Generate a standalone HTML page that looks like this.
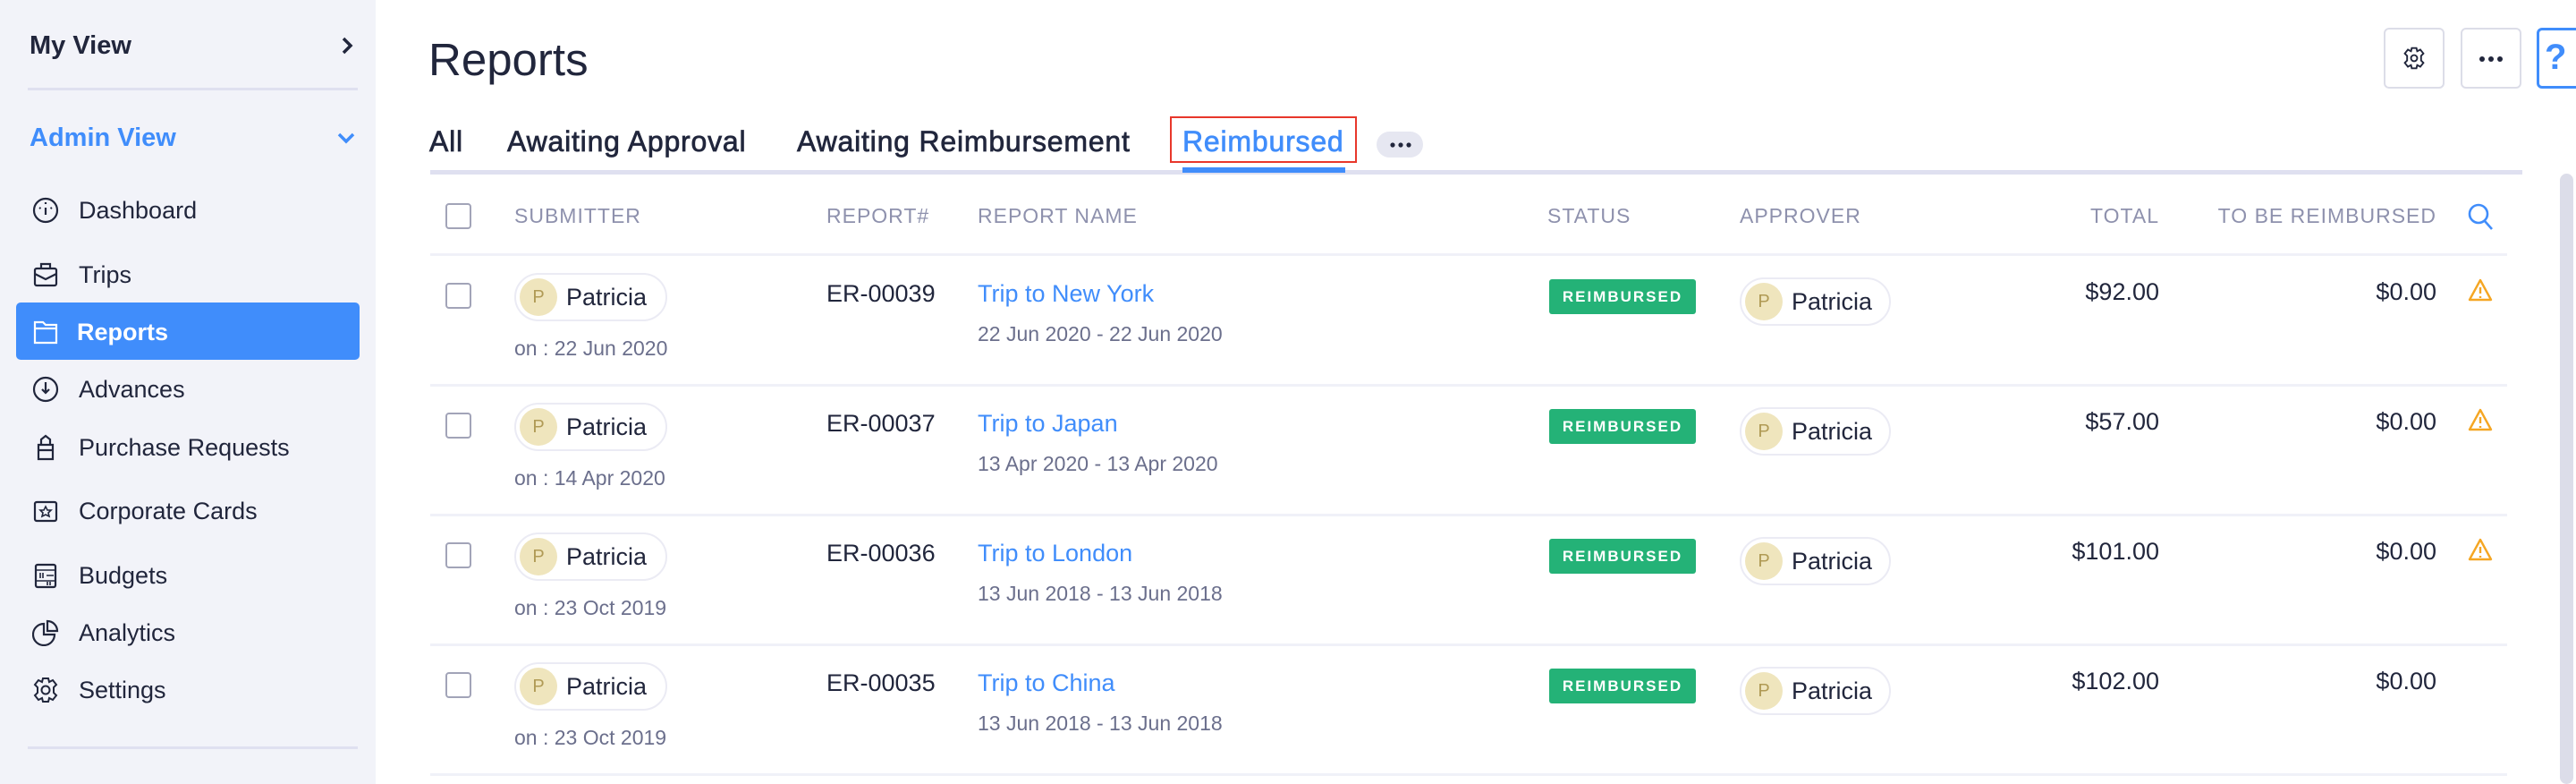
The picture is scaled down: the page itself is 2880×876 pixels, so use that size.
<!DOCTYPE html>
<html><head><meta charset="utf-8"><style>
*{margin:0;padding:0;box-sizing:border-box}
body{width:2880px;height:876px;overflow:hidden;background:#fff;font-family:"Liberation Sans",sans-serif;color:#21263c;position:relative}
.a{position:absolute;white-space:nowrap}
.side{position:absolute;left:0;top:0;width:420px;height:876px;background:#f2f3f9}
.mi{position:absolute;left:88px;font-size:27px;line-height:34px;color:#21263c}
.ic{position:absolute;left:36px;width:30px;height:30px}
.hd{position:absolute;top:227px;font-size:23px;letter-spacing:1px;color:#8e91ad;line-height:28px}
.cb{position:absolute;left:498px;width:29px;height:29px;border:2.5px solid #a2a4b8;border-radius:4px;background:#fff}
.pill{position:absolute;height:54px;border:2px solid #ebebf4;border-radius:27px;background:#fff;padding-left:56px;font-size:27px;line-height:50px;color:#21263c}
.pill i{position:absolute;left:4px;top:4px;width:42px;height:42px;border-radius:50%;background:#efe5bd;color:#b09a55;font-style:normal;font-size:20px;line-height:42px;text-align:center;box-shadow:0 0 0 3px #fff}
.dt{font-size:23px;color:#6b6f8c}
.badge{position:absolute;left:1732px;width:164px;height:39px;background:#24b277;border-radius:3px;color:#fff;font-size:17px;font-weight:bold;letter-spacing:2px;text-align:center;line-height:39px}
.num{font-size:27px;text-align:right}
.ln{position:absolute;left:481px;width:2322px;height:3px;background:#f0f1f8}
.tab{position:absolute;top:139px;font-size:32px;line-height:38px;color:#21263c;-webkit-text-stroke:0.7px currentColor;letter-spacing:0.8px;white-space:nowrap}
</style></head><body>
<div class="side">
 <div class="a" style="left:33px;top:33px;font-size:29px;font-weight:bold;line-height:36px">My View</div>
 <svg class="a" style="left:380px;top:40px" width="16" height="22" viewBox="0 0 16 22"><path d="M4 3l8 8-8 8" fill="none" stroke="#21263c" stroke-width="3.5"/></svg>
 <div class="a" style="left:31px;top:98px;width:369px;height:3px;background:#dfe0f0"></div>
 <div class="a" style="left:33px;top:136px;font-size:29px;font-weight:bold;color:#408dfb;line-height:36px">Admin View</div>
 <svg class="a" style="left:376px;top:146px" width="22" height="16" viewBox="0 0 22 16"><path d="M3 4l8 8 8-8" fill="none" stroke="#408dfb" stroke-width="3.5"/></svg>
 <svg class="ic" style="top:220px" viewBox="0 0 30 30"><circle cx="15" cy="15" r="13" fill="none" stroke="#21263c" stroke-width="2.2"/><path d="M15 6v2M8 12l1.5 1M22 12l-1.5 1M15 12v8" stroke="#21263c" stroke-width="2.2"/></svg>
 <div class="mi" style="top:218px">Dashboard</div>
 <svg class="ic" style="top:292px" viewBox="0 0 30 30"><rect x="3" y="8" width="24" height="19" rx="2" fill="none" stroke="#21263c" stroke-width="2.2"/><path d="M10 8V3h10v5M3 14l12 6 12-6" fill="none" stroke="#21263c" stroke-width="2.2"/></svg>
 <div class="mi" style="top:290px">Trips</div>
 <div class="a" style="left:18px;top:338px;width:384px;height:64px;background:#408dfb;border-radius:5px"></div>
 <svg class="ic" style="top:356px" viewBox="0 0 30 30"><path d="M3 4h9l3 3h12v20H3z M3 11h24" fill="none" stroke="#fff" stroke-width="2.2"/></svg>
 <div class="mi" style="top:354px;left:86px;color:#fff;font-weight:bold">Reports</div>
 <svg class="ic" style="top:420px" viewBox="0 0 30 30"><circle cx="15" cy="15" r="13" fill="none" stroke="#21263c" stroke-width="2.2"/><path d="M15 7v12M11 15l4 4 4-4" fill="none" stroke="#21263c" stroke-width="2.2"/></svg>
 <div class="mi" style="top:418px">Advances</div>
 <svg class="ic" style="top:485px" viewBox="0 0 30 30"><path d="M7 12h16v16H7zM10 12V6l5-4 5 4v6M7 18h16" fill="none" stroke="#21263c" stroke-width="2.2"/></svg>
 <div class="mi" style="top:483px">Purchase Requests</div>
 <svg class="ic" style="top:556px" viewBox="0 0 30 30"><rect x="3" y="5" width="24" height="21" rx="2" fill="none" stroke="#21263c" stroke-width="2.2"/><path d="M15 10l2 4h4l-3 3 1 4-4-2-4 2 1-4-3-3h4z" fill="none" stroke="#21263c" stroke-width="1.6"/></svg>
 <div class="mi" style="top:554px">Corporate Cards</div>
 <svg class="ic" style="top:628px" viewBox="0 0 30 30"><rect x="4" y="3" width="22" height="25" rx="2" fill="none" stroke="#21263c" stroke-width="2.2"/><path d="M4 9h22M4 21h22M9 12v6M12 12v6M16 15h8M17 22v4M20 22v4" stroke="#21263c" stroke-width="1.6"/></svg>
 <div class="mi" style="top:626px">Budgets</div>
 <svg class="ic" style="top:692px" viewBox="0 0 30 30"><path d="M13 5A12 12 0 1 0 25 17H13z M17 2v11h11A11 11 0 0 0 17 2z" fill="none" stroke="#21263c" stroke-width="2.2"/></svg>
 <div class="mi" style="top:690px">Analytics</div>
 <svg class="ic" style="top:756px" viewBox="0 0 30 30"><path d="M12 2h6l1 4 4-2 4 5-3 3 0 6 3 3-4 5-4-2-1 4h-6l-1-4-4 2-4-5 3-3v-6L3 9l4-5 4 2z" fill="none" stroke="#21263c" stroke-width="2"/><circle cx="15" cy="15" r="4.5" fill="none" stroke="#21263c" stroke-width="2"/></svg>
 <div class="mi" style="top:754px">Settings</div>
 <div class="a" style="left:31px;top:834px;width:369px;height:3px;background:#dfe0f0"></div>
</div>

<div class="a" style="left:479px;top:37px;font-size:51px;line-height:60px;color:#21263c">Reports</div>
<div class="a" style="left:2665px;top:31px;width:68px;height:68px;border:2px solid #dcdde8;border-radius:6px"></div>
<svg class="a" style="left:2686px;top:52px" width="26" height="26" viewBox="0 0 30 30"><path d="M12 2h6l1 4 4-2 4 5-3 3 0 6 3 3-4 5-4-2-1 4h-6l-1-4-4 2-4-5 3-3v-6L3 9l4-5 4 2z" fill="none" stroke="#21263c" stroke-width="2.2"/><circle cx="15" cy="15" r="4" fill="none" stroke="#21263c" stroke-width="2.2"/></svg>
<div class="a" style="left:2751px;top:31px;width:68px;height:68px;border:2px solid #dcdde8;border-radius:6px"></div>
<svg class="a" style="left:2771px;top:62px" width="28" height="8"><circle cx="4" cy="4" r="3" fill="#21263c"/><circle cx="14" cy="4" r="3" fill="#21263c"/><circle cx="24" cy="4" r="3" fill="#21263c"/></svg>
<div class="a" style="left:2836px;top:31px;width:68px;height:68px;border:3px solid #408dfb;border-radius:6px"></div>
<div class="a" style="left:2845px;top:42px;font-size:40px;font-weight:bold;color:#408dfb">?</div>

<div class="tab" style="left:480px">All</div>
<div class="tab" style="left:567px">Awaiting Approval</div>
<div class="tab" style="left:891px">Awaiting Reimbursement</div>
<div class="a" style="left:1308px;top:130px;width:209px;height:52px;border:2.5px solid #e8372b"></div>
<div class="tab" style="left:1322px;color:#408dfb">Reimbursed</div>
<div class="a" style="left:1539px;top:147px;width:52px;height:29px;border-radius:15px;background:#e6e7f1"></div>
<svg class="a" style="left:1553px;top:158px" width="26" height="8"><circle cx="4" cy="4" r="2.6" fill="#21263c"/><circle cx="13" cy="4" r="2.6" fill="#21263c"/><circle cx="22" cy="4" r="2.6" fill="#21263c"/></svg>
<div class="a" style="left:481px;top:190px;width:2339px;height:5px;background:#dfe0f0"></div>
<div class="a" style="left:1322px;top:187px;width:182px;height:6px;background:#408dfb"></div>
<div class="a" style="left:2862px;top:194px;width:15px;height:682px;background:#dcdde9;border-radius:8px"></div>

<div class="cb" style="top:227px"></div>
<div class="hd" style="left:575px">SUBMITTER</div>
<div class="hd" style="left:924px">REPORT#</div>
<div class="hd" style="left:1093px">REPORT NAME</div>
<div class="hd" style="left:1730px">STATUS</div>
<div class="hd" style="left:1945px">APPROVER</div>
<div class="hd" style="left:2200px;width:214px;text-align:right">TOTAL</div>
<div class="hd" style="left:2400px;width:324px;text-align:right">TO BE REIMBURSED</div>
<svg class="a" style="left:2758px;top:226px" width="32" height="32" viewBox="0 0 32 32"><circle cx="13" cy="13" r="10" fill="none" stroke="#408dfb" stroke-width="2.6"/><path d="M20 21l8 9" stroke="#408dfb" stroke-width="2.6"/></svg>
<div class="ln" style="top:283px"></div>

<div class="cb" style="top:316px"></div>
<div class="pill" style="left:575px;top:305px;width:171px"><i>P</i>Patricia</div>
<div class="a dt" style="left:575px;top:376px">on : 22 Jun 2020</div>
<div class="a num" style="left:924px;top:313px">ER-00039</div>
<div class="a" style="left:1093px;top:313px;font-size:27px;color:#408dfb">Trip to New York</div>
<div class="a dt" style="left:1093px;top:360px">22 Jun 2020 - 22 Jun 2020</div>
<div class="badge" style="top:312px">REIMBURSED</div>
<div class="pill" style="left:1945px;top:310px;width:169px"><i>P</i>Patricia</div>
<div class="a num" style="left:2200px;top:311px;width:214px">$92.00</div>
<div class="a num" style="left:2500px;top:311px;width:224px">$0.00</div>
<svg class="a" style="left:2758px;top:310px" width="30" height="30" viewBox="0 0 30 30"><path d="M15 3L27 25H3z" fill="none" stroke="#f5a623" stroke-width="2.4" stroke-linejoin="round"/><path d="M15 11v7M15 21v2" stroke="#f5a623" stroke-width="2.4"/></svg>
<div class="ln" style="top:429px"></div>

<div class="cb" style="top:461px"></div>
<div class="pill" style="left:575px;top:450px;width:171px"><i>P</i>Patricia</div>
<div class="a dt" style="left:575px;top:521px">on : 14 Apr 2020</div>
<div class="a num" style="left:924px;top:458px">ER-00037</div>
<div class="a" style="left:1093px;top:458px;font-size:27px;color:#408dfb">Trip to Japan</div>
<div class="a dt" style="left:1093px;top:505px">13 Apr 2020 - 13 Apr 2020</div>
<div class="badge" style="top:457px">REIMBURSED</div>
<div class="pill" style="left:1945px;top:455px;width:169px"><i>P</i>Patricia</div>
<div class="a num" style="left:2200px;top:456px;width:214px">$57.00</div>
<div class="a num" style="left:2500px;top:456px;width:224px">$0.00</div>
<svg class="a" style="left:2758px;top:455px" width="30" height="30" viewBox="0 0 30 30"><path d="M15 3L27 25H3z" fill="none" stroke="#f5a623" stroke-width="2.4" stroke-linejoin="round"/><path d="M15 11v7M15 21v2" stroke="#f5a623" stroke-width="2.4"/></svg>
<div class="ln" style="top:574px"></div>

<div class="cb" style="top:606px"></div>
<div class="pill" style="left:575px;top:595px;width:171px"><i>P</i>Patricia</div>
<div class="a dt" style="left:575px;top:666px">on : 23 Oct 2019</div>
<div class="a num" style="left:924px;top:603px">ER-00036</div>
<div class="a" style="left:1093px;top:603px;font-size:27px;color:#408dfb">Trip to London</div>
<div class="a dt" style="left:1093px;top:650px">13 Jun 2018 - 13 Jun 2018</div>
<div class="badge" style="top:602px">REIMBURSED</div>
<div class="pill" style="left:1945px;top:600px;width:169px"><i>P</i>Patricia</div>
<div class="a num" style="left:2200px;top:601px;width:214px">$101.00</div>
<div class="a num" style="left:2500px;top:601px;width:224px">$0.00</div>
<svg class="a" style="left:2758px;top:600px" width="30" height="30" viewBox="0 0 30 30"><path d="M15 3L27 25H3z" fill="none" stroke="#f5a623" stroke-width="2.4" stroke-linejoin="round"/><path d="M15 11v7M15 21v2" stroke="#f5a623" stroke-width="2.4"/></svg>
<div class="ln" style="top:719px"></div>

<div class="cb" style="top:751px"></div>
<div class="pill" style="left:575px;top:740px;width:171px"><i>P</i>Patricia</div>
<div class="a dt" style="left:575px;top:811px">on : 23 Oct 2019</div>
<div class="a num" style="left:924px;top:748px">ER-00035</div>
<div class="a" style="left:1093px;top:748px;font-size:27px;color:#408dfb">Trip to China</div>
<div class="a dt" style="left:1093px;top:795px">13 Jun 2018 - 13 Jun 2018</div>
<div class="badge" style="top:747px">REIMBURSED</div>
<div class="pill" style="left:1945px;top:745px;width:169px"><i>P</i>Patricia</div>
<div class="a num" style="left:2200px;top:746px;width:214px">$102.00</div>
<div class="a num" style="left:2500px;top:746px;width:224px">$0.00</div>
<div class="ln" style="top:864px"></div>
</body></html>
